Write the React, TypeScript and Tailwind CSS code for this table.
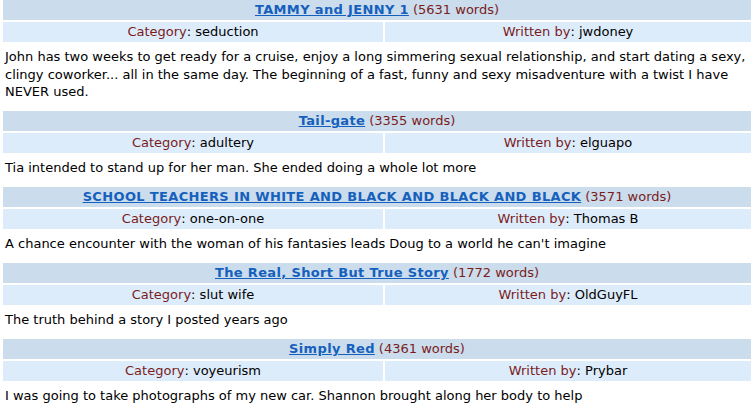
import React from "react";

type Story = {
  title: string;
  words: number;
  category: string;
  author: string;
  blurb: string;
};

const stories: Story[] = [
  {
    title: "TAMMY and JENNY 1",
    words: 5631,
    category: "seduction",
    author: "jwdoney",
    blurb:
      "John has two weeks to get ready for a cruise, enjoy a long simmering sexual relationship, and start dating a sexy, clingy coworker... all in the same day. The beginning of a fast, funny and sexy misadventure with a twist I have NEVER used.",
  },
  {
    title: "Tail-gate",
    words: 3355,
    category: "adultery",
    author: "elguapo",
    blurb: "Tia intended to stand up for her man. She ended doing a whole lot more",
  },
  {
    title: "SCHOOL TEACHERS IN WHITE AND BLACK AND BLACK AND BLACK",
    words: 3571,
    category: "one-on-one",
    author: "Thomas B",
    blurb:
      "A chance encounter with the woman of his fantasies leads Doug to a world he can't imagine",
  },
  {
    title: "The Real, Short But True Story",
    words: 1772,
    category: "slut wife",
    author: "OldGuyFL",
    blurb: "The truth behind a story I posted years ago",
  },
  {
    title: "Simply Red",
    words: 4361,
    category: "voyeurism",
    author: "Prybar",
    blurb:
      "I was going to take photographs of my new car. Shannon brought along her body to help",
  },
];

function StoryBlock({ s }: { s: Story }) {
  return (
    <div className="flex flex-col gap-[2px]">
      <div className="h-[20px] bg-[#cbdcec] flex items-center justify-center text-[#7a1c1c]">
        <a
          href="#"
          className="font-bold tracking-[0.35px] text-[#1560bd] underline mr-[4px]"
        >
          {s.title}
        </a>
        ({s.words} words)
      </div>
      <div className="grid grid-cols-[380px_1fr] gap-[2px]">
        <div className="h-[20px] bg-[#ddecfb] flex items-center justify-center">
          <span className="text-[#7a1c1c]">Category</span>: {s.category}
        </div>
        <div className="h-[20px] bg-[#ddecfb] flex items-center justify-center">
          <span className="text-[#7a1c1c]">Written by</span>: {s.author}
        </div>
      </div>
      <div className="px-[2px] pt-[4px] pb-[8.5px] leading-[17.5px] text-black">
        {s.blurb}
      </div>
    </div>
  );
}

export default function App() {
  return (
    <div
      className="w-[752px] h-[407px] overflow-hidden bg-white pl-[3px] pr-[1px] text-[13px] text-black"
      style={{ fontFamily: '"DejaVu Sans", sans-serif' }}
    >
      <div className="flex flex-col gap-[2px]">
        {stories.map((s) => (
          <StoryBlock key={s.title} s={s} />
        ))}
      </div>
    </div>
  );
}
